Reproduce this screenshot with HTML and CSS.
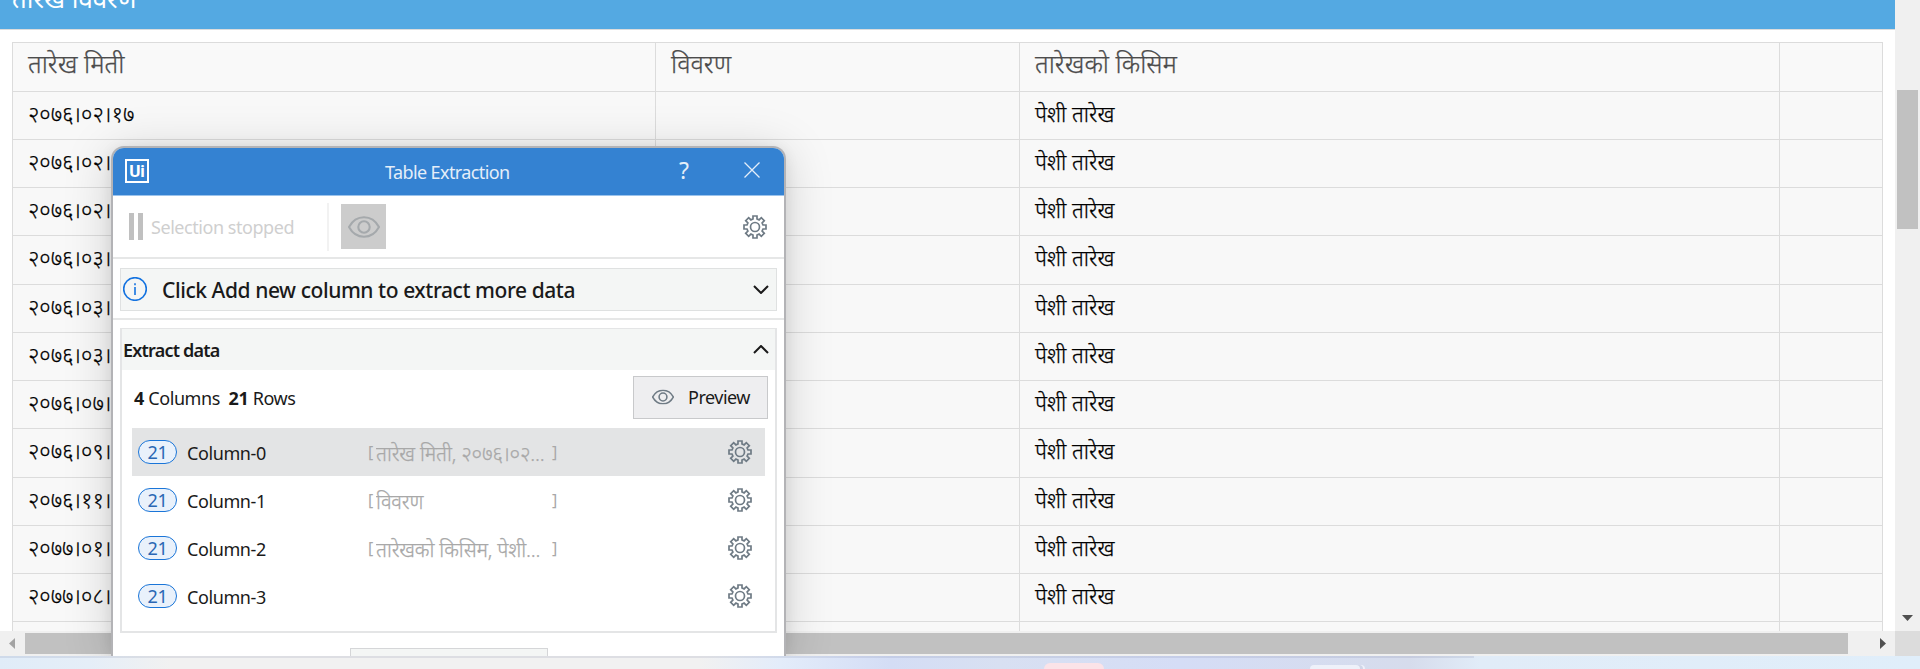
FILE: index.html
```
<!DOCTYPE html>
<html lang="hi">
<head>
<meta charset="utf-8">
<title>Table Extraction</title>
<link rel="stylesheet" href="styles.css">
</head>
<body>
<svg class="defs" width="0" height="0" aria-hidden="true">
  <symbol id="gear" viewBox="0 0 24 24">
    <path d="M10 1h4v3l2.1.9 2.2-2.2 3 3-2.2 2.2.9 2.1h3v4h-3l-.9 2.1 2.2 2.2-3 3-2.2-2.2-2.1.9v3h-4v-3l-2.1-.9-2.2 2.2-3-3 2.2-2.2-.9-2.1H1v-4h3l.9-2.1-2.2-2.2 3-3 2.2 2.2 2.1-.9z"/>
    <circle cx="12" cy="12" r="4.5"/>
  </symbol>
  <symbol id="eye" viewBox="0 0 32 22">
    <path d="M1 11C8-2 24-2 31 11C24 24 8 24 1 11z"/>
    <circle cx="16" cy="11" r="5.7"/>
  </symbol>
</svg>
<div class="screen">
  <div class="view">
    <main class="page">
      <h1 class="banner"><span>तारेख विवरण</span></h1>
      <div class="grid">
        <div class="row head"><div>तारेख मिती</div><div>विवरण</div><div>तारेखको किसिम</div><div></div></div>
        <div class="row"><div>२०७६।०२।१७</div><div></div><div>पेशी तारेख</div><div></div></div>
        <div class="row"><div>२०७६।०२।</div><div></div><div>पेशी तारेख</div><div></div></div>
        <div class="row"><div>२०७६।०२।</div><div></div><div>पेशी तारेख</div><div></div></div>
        <div class="row tall"><div>२०७६।०३।</div><div></div><div>पेशी तारेख</div><div></div></div>
        <div class="row"><div>२०७६।०३।</div><div></div><div>पेशी तारेख</div><div></div></div>
        <div class="row"><div>२०७६।०३।</div><div></div><div>पेशी तारेख</div><div></div></div>
        <div class="row"><div>२०७६।०७।</div><div></div><div>पेशी तारेख</div><div></div></div>
        <div class="row tall"><div>२०७६।०९।</div><div></div><div>पेशी तारेख</div><div></div></div>
        <div class="row"><div>२०७६।११।०</div><div></div><div>पेशी तारेख</div><div></div></div>
        <div class="row"><div>२०७७।०१।</div><div></div><div>पेशी तारेख</div><div></div></div>
        <div class="row"><div>२०७७।०८।</div><div></div><div>पेशी तारेख</div><div></div></div>
        <div class="row"><div></div><div></div><div></div><div></div></div>
      </div>
    </main>
    <div class="vbar"><div class="vthumb"></div><svg width="11" height="6"><path d="M0 0h11L5.5 6z"/></svg></div>
    <div class="hbar"><svg class="dim" width="6" height="11"><path d="M6 0v11L0 5.500z"/></svg><div class="hthumb"></div><svg width="6" height="11"><path d="M0 0v11L6 5.500z"/></svg></div>
    <div class="corner"></div>
  </div>

  <section class="dialog">
    <header class="title">
      <div class="logo">Ui</div>
      <div class="caption">Table Extraction</div>
      <div class="help">?</div>
      <svg class="close" width="16" height="16"><path d="M.5.5l15 15M15.500.5l-15 15"/></svg>
    </header>
    <div class="tools">
      <div class="pause"><i></i><i></i></div>
      <div class="stopped">Selection stopped</div>
      <div class="sep"></div>
      <div class="eyebox"><svg class="eye" width="32" height="22"><use href="#eye"/></svg></div>
      <svg class="gear" width="24" height="24"><use href="#gear"/></svg>
    </div>
    <div class="infowrap">
      <div class="info">
        <svg class="i" width="24" height="24"><circle cx="12" cy="12" r="11.300"/><path d="M12 10v8M12 6.200v2"/></svg>
        <div class="tip">Click Add new column to extract more data</div>
        <svg class="chev" width="16" height="9"><path d="M1 1l7 7 7-7"/></svg>
      </div>
    </div>
    <div class="extract">
      <div class="exhead"><div>Extract data</div><svg class="chev" width="16" height="9"><path d="M1 8l7-7 7 7"/></svg></div>
      <div class="summary">
        <div class="count"><b>4</b> Columns&nbsp; <b>21</b> Rows</div>
        <div class="preview"><svg class="eye" width="22" height="16" viewBox="0 0 32 22"><use href="#eye"/></svg><span>Preview</span></div>
      </div>
      <div class="col on"><div class="pill">21</div><div class="name">Column-0</div><div class="br">[</div><div class="val">तारेख मिती, २०७६।०२...</div><div class="br">]</div><svg class="gear" width="24" height="24"><use href="#gear"/></svg></div>
      <div class="col"><div class="pill">21</div><div class="name">Column-1</div><div class="br">[</div><div class="val">विवरण</div><div class="br">]</div><svg class="gear" width="24" height="24"><use href="#gear"/></svg></div>
      <div class="col"><div class="pill">21</div><div class="name">Column-2</div><div class="br">[</div><div class="val">तारेखको किसिम, पेशी...</div><div class="br">]</div><svg class="gear" width="24" height="24"><use href="#gear"/></svg></div>
      <div class="col"><div class="pill">21</div><div class="name">Column-3</div><svg class="gear" width="24" height="24"><use href="#gear"/></svg></div>
    </div>
    <div class="stub"></div>
  </section>

  <footer class="taskbar"><div class="edge"></div><div class="app pink"></div><div class="app pale"></div></footer>
</div>
</body>
</html>
```
FILE: styles.css
```
* { box-sizing: border-box; }
html, body { height: 669px; overflow: hidden; }
body { margin: 0; font-family: "Noto Sans", "Open Sans", sans-serif; color: #1a1a1a; }
svg { display: block; flex: none; }
.defs { position: absolute; }
.screen { position: relative; width: 1920px; height: 669px; overflow: hidden; display: flex; flex-direction: column; }

.view { height: 656px; display: grid; grid-template: 631px 25px / 1895px 25px; }
.page { background: #fff; overflow: hidden; }
.banner { margin: 0; height: 30px; background: #54a9e2; border-bottom: 1px solid #dcdcdc; color: #fff; font-size: 25.8px; font-weight: 400; line-height: 34px; padding-left: 12px; display: flex; align-items: flex-end; overflow: hidden; }
.banner span { margin-bottom: 14px; white-space: nowrap; }
.grid { margin: 12px 0 0 12px; width: 1871px; border: 1px solid #dcdcdc; border-bottom: 0; }
.row { display: grid; grid-template-columns: 643px 364px 760px 102px; height: 48px; border-bottom: 1px solid #dcdcdc; background: #f8f8f8; color: #000; font-size: 21.8px; font-weight: 300; -webkit-text-stroke: .25px; line-height: 44px; }
.row > div { padding-left: 15px; border-right: 1px solid #dcdcdc; white-space: nowrap; overflow: hidden; }
.row > div:last-child { border-right: 0; }
.tall { height: 49px; }
.head { height: 49px; background: #f9f9f9; color: #4c4c4c; font-size: 25.4px; line-height: 41px; }

.vbar { background: #f0f0f0; display: flex; flex-direction: column; align-items: center; justify-content: space-between; padding: 90px 0 10px; }
.vthumb { width: 21px; height: 139px; background: #c1c1c1; }
.vbar svg, .hbar svg { fill: #505050; }
.hbar { background: #f0f0f0; display: flex; align-items: center; padding-left: 9px; }
.hbar .dim { fill: #a3a3a3; margin-right: 10px; }
.hthumb { width: 1823px; height: 21px; background: #c1c1c1; margin-right: 32px; }
.corner { background: #dcdcdc; }

.dialog { position: absolute; left: 111px; top: 146px; width: 675px; height: 510px; border: 2px solid #b3b3b6; border-bottom: 0; border-radius: 13px 13px 0 0; background: #fff; overflow: hidden; box-shadow: 0 6px 48px rgba(0,0,0,.17), 0 2px 14px rgba(0,0,0,.08); font-size: 18px; letter-spacing: -.5px; clip-path: inset(-80px -80px 0 -80px); }
.title { height: 48px; background: #3482d2; border-bottom: 1px solid #9bc3ec; display: flex; align-items: center; color: #e4eef9; padding-left: 12px; }
.logo { width: 24px; height: 24px; margin-top: -2px; border: 2px solid #fff; color: #fff; font: 700 17px/21px Roboto, sans-serif; text-align: center; letter-spacing: 0; }
.caption { width: 126px; margin-left: 236px; white-space: nowrap; letter-spacing: -.6px; }
.help { width: 12px; margin: -3px 0 0 168px; font-size: 23px; }
.close { margin: -4px 0 0 53px; fill: none; stroke: #e4eef9; stroke-width: 1.3; }
.tools { height: 63px; border-bottom: 2px solid #e6e7e7; display: flex; align-items: center; padding-left: 16px; }
.pause { width: 14px; height: 27px; display: flex; justify-content: space-between; }
.pause i { width: 5px; background: #c0c0c0; }
.stopped { color: #cfcfcf; margin-left: 8px; width: 176px; white-space: nowrap; letter-spacing: -.45px; }
.sep { width: 2px; height: 48px; background: #f2f2f2; }
.eyebox { width: 45px; height: 45px; margin-left: 12px; background: #ccc; display: flex; align-items: center; justify-content: center; }
.eye, .gear { fill: none; stroke: #6f7b85; stroke-width: 1.7; }
.eyebox .eye { stroke: #a5a9ac; stroke-width: 2.1; }
.preview .eye { stroke-width: 2.3; }
.tools .gear { margin-left: 357px; }
.infowrap { height: 61px; padding: 9px 7px 0; border-bottom: 2px solid #e6e7e7; }
.info { height: 43px; background: #f4f6f5; border: 1px solid #dfe1e1; display: flex; align-items: center; padding: 0 7px 0 2px; }
.i { fill: none; stroke: #1473e0; stroke-width: 1.6; margin-top: -2px; }
.tip { flex: 1; padding-left: 15px; font-size: 21px; font-weight: 500; white-space: nowrap; letter-spacing: -.43px; }
.chev { fill: none; stroke: #1a1a1a; stroke-width: 2; }
.extract { margin: 8px 7px 0; height: 305px; border: 2px solid #e4e5e6; border-width: 1px 2px 2px; }
.exhead { height: 41px; background: #f4f6f5; display: flex; align-items: center; justify-content: space-between; padding: 0 6px 0 1px; font-weight: 600; letter-spacing: -.8px; }
.summary { height: 58px; display: flex; align-items: center; justify-content: space-between; padding: 0 7px 3px 12px; }
.count { white-space: nowrap; letter-spacing: -.4px; }
.preview { width: 135px; height: 43px; margin-top: -1px; background: #eeeef0; border: 1px solid #c8c9cb; display: flex; align-items: center; padding-left: 18px; }
.preview span { margin-left: 14px; }
.col { width: 633px; height: 48px; margin-left: 10px; display: flex; align-items: center; padding-left: 6px; letter-spacing: -.4px; }
.on { background: #e3e4e5; }
.pill { width: 39px; height: 24px; border: 1px solid #1a75d8; border-radius: 12px; background: #e9f1fb; color: #2b67b4; line-height: 22px; text-align: center; }
.name { width: 181px; margin-left: 10px; padding-top: 2px; }
.br { color: #a8a8a8; width: 8px; font-size: 16px; }
.val { width: 176px; color: #a8a8a8; white-space: nowrap; overflow: hidden; font-size: 20.3px; font-weight: 300; -webkit-text-stroke: .25px; padding-top: 1px; letter-spacing: -.2px; }
.col .gear { margin-left: auto; margin-right: 13px; }
.stub { width: 198px; height: 20px; margin: 15px 0 0 237px; border: 1px solid #d5d6d8; background: #f4f6f5; }

.taskbar { position: relative; height: 13px; background: linear-gradient(90deg, #e0ecf8 0, #e5eef8 90px, #f1f1f1 170px, #f1f1f1 700px, #e3ecfa 780px, #d4ddf5 890px, #d8e0f2 1000px, #d5ddf6 1180px, #d6dcec 1410px, #e1ecf8 1480px, #e0eefa 1920px); }
.edge { width: 1474px; height: 2px; background: rgba(90,100,140,.13); }
.app { position: absolute; bottom: 0; border-radius: 6px 6px 0 0; }
.pink { left: 1044px; width: 60px; height: 6px; background: #fbe3e8; }
.pale { left: 1310px; width: 50px; height: 4px; background: #eef1fa; box-shadow: 3px 0 0 #d0d6e8, 5px 0 0 #eef1fa; }
```
